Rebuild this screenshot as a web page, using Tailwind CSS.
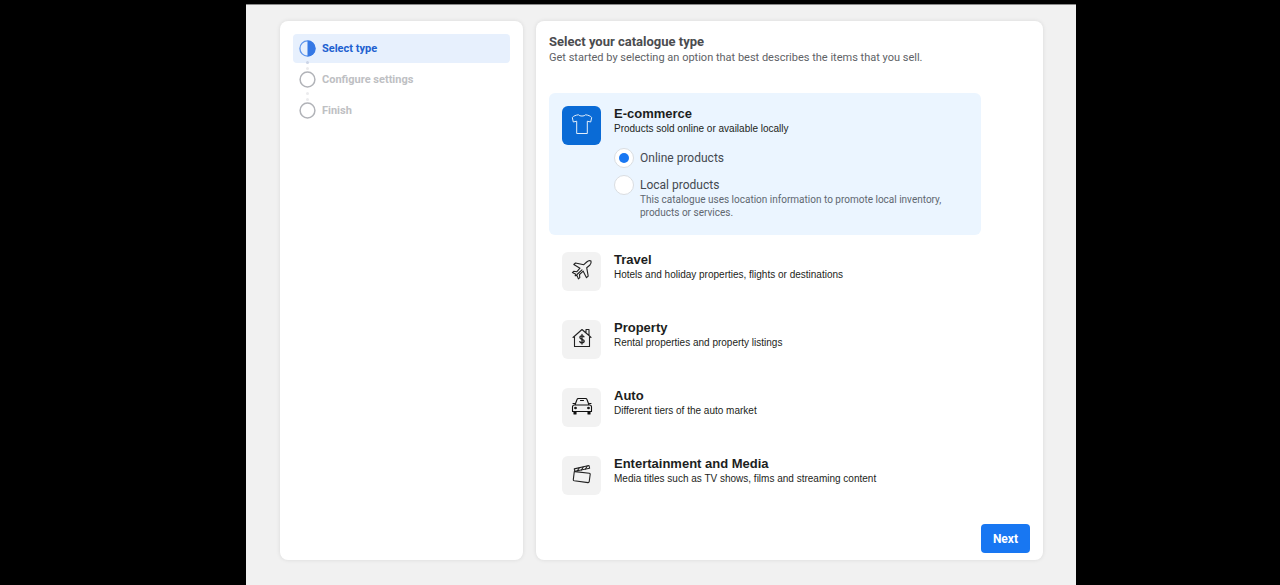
<!DOCTYPE html>
<html lang="en-GB">
<head>
    <meta charset="UTF-8">
    <meta name="viewport" content="width=device-width, initial-scale=1.0">
    <title>Create a catalogue - Select type</title>
    <script src="https://cdn.jsdelivr.net/npm/@tailwindcss/browser@4"></script>
</head>
<body class="bg-black pt-1 font-[Roboto,'Liberation_Sans',sans-serif]">
    <div class="ml-[246px] mr-[204px] min-h-[calc(100vh-4px)] flex items-stretch gap-[13px] border-t border-[#8a8a8a] bg-[#f1f1f1] pt-4 pb-[25px] pl-[34px] pr-[33px]">

        <!-- Steps -->
        <aside class="w-[243px] shrink-0 rounded-lg bg-white p-[13px] shadow-[0_0_4px_rgba(0,0,0,0.1)]">
            <ol class="text-[11px] leading-4 font-bold">
                <li class="flex h-[29px] items-center gap-[6px] rounded bg-[#e7f0fd] pl-[6px] text-[#2160d0]" aria-current="step">
                    <svg class="size-[17px]" viewBox="0 0 17 17" fill="none">
                        <circle cx="8.5" cy="8.5" r="7.6" stroke="#5f96ec" stroke-width="1.3"/>
                        <path d="M8.5 0.5a8 8 0 0 1 0 16z" fill="#3578e5"/>
                    </svg>
                    Select type
                </li>
                <li class="relative mt-[2px] flex h-[29px] items-center gap-[6px] pl-[6px] text-[#bec0c3]">
                    <span class="absolute left-[13px] -top-[4px] size-[3px] rounded-full bg-[#cbd4e6]"></span>
                    <span class="absolute left-[13px] top-[2px] size-[3px] rounded-full bg-[#ebebed]"></span>
                    <svg class="size-[17px]" viewBox="0 0 17 17" fill="none">
                        <circle cx="8.5" cy="8.5" r="7.4" stroke="#b1b3b8" stroke-width="1.5"/>
                    </svg>
                    Configure settings
                </li>
                <li class="relative mt-[2px] flex h-[29px] items-center gap-[6px] pl-[6px] text-[#bec0c3]">
                    <span class="absolute left-[13px] -top-[4px] size-[3px] rounded-full bg-[#ebebed]"></span>
                    <span class="absolute left-[13px] top-[2px] size-[3px] rounded-full bg-[#ebebed]"></span>
                    <svg class="size-[17px]" viewBox="0 0 17 17" fill="none">
                        <circle cx="8.5" cy="8.5" r="7.4" stroke="#b1b3b8" stroke-width="1.5"/>
                    </svg>
                    Finish
                </li>
            </ol>
        </aside>

        <!-- Catalogue type -->
        <main class="flex flex-1 flex-col rounded-lg bg-white p-[13px] pb-[7px] shadow-[0_0_4px_rgba(0,0,0,0.1)]">
            <h1 class="text-[13px] leading-4 font-bold text-[#4b4c4f]">Select your catalogue type</h1>
            <p class="text-[11px] leading-4 text-[#606266]">Get started by selecting an option that best describes the items that you sell.</p>

            <div class="mt-[27px] mr-[49px] flex flex-col gap-1">
                <section class="flex gap-[13px] rounded-md bg-[#ebf5ff] p-[13px] pb-4">
                    <span class="grid size-[39px] shrink-0 place-items-center rounded-md bg-[#0a6bd6]">
                        <svg class="mb-1 size-[22px]" viewBox="0 0 22 22" fill="none" stroke="#e4effb" stroke-width="1" stroke-linejoin="round">
                            <path d="M7.5 1.8C5 2 2.5 3 1.3 4.500L2.300 9l3.400-.8v12.300h10.600V8.200l3.400.8 1-4.500C19.500 3 17 2 14.500 1.800c-.8 1.700-6.200 1.700-7 0z"/>
                        </svg>
                    </span>
                    <div>
                        <h2 class="font-['Liberation_Sans',Arial,sans-serif] text-[13px] leading-4 font-bold text-[#1c1e21]">E-commerce</h2>
                        <p class="font-['Liberation_Sans',Arial,sans-serif] text-[10px] leading-[13px] text-[#1c1e21]">Products sold online or available locally</p>
                        <div class="mt-[13px] flex items-center gap-[6px]">
                            <input type="radio" name="product_kind" id="online" checked class="grid size-5 shrink-0 appearance-none place-content-center rounded-full border border-[#dadde1] bg-white before:size-[10px] before:rounded-full checked:before:bg-[#1877f2]">
                            <label for="online" class="text-xs leading-4 text-[#444950]">Online products</label>
                        </div>
                        <div class="mt-[7px] flex items-start gap-[6px]">
                            <input type="radio" name="product_kind" id="local" aria-describedby="local-help" class="grid size-5 shrink-0 appearance-none place-content-center rounded-full border border-[#dadde1] bg-white before:size-[10px] before:rounded-full checked:before:bg-[#1877f2]">
                            <div class="pt-[2px]">
                                <label for="local" class="block text-xs leading-4 text-[#444950]">Local products</label>
                                <p id="local-help" class="max-w-[310px] text-[10px] leading-[13px] text-[#606770]">This catalogue uses location information to promote local inventory, products or services.</p>
                            </div>
                        </div>
                    </div>
                </section>

                <button type="button" class="flex gap-[13px] rounded-md p-[13px] pb-3 text-left">
                    <span class="grid size-[39px] shrink-0 place-items-center rounded-md bg-[#f2f2f2]">
                        <svg class="mb-1 size-[22px]" viewBox="0 0 22 22" fill="none" stroke="#222" stroke-width="1.1" stroke-linejoin="round" stroke-linecap="round">
                            <path d="M20 2c-1.500-.8-3.200 0-4.300 1l-2.900 2.700L4.500 4 2.800 5.500l6.200 3.700-3.300 3.600-3-.5-1.300 1.300 3.400 1.600-.6 1.600 1.800-.4 1.400 3.500 1.400-1.200-.3-3.200 3.700-3.300 3.300 6.500 1.700-1.600-1.500-8.400L18.700 6.300C19.700 5.200 20.500 3.500 20 2z"/>
                            <path d="M6 15.500 11 10.900"/>
                        </svg>
                    </span>
                    <span class="font-['Liberation_Sans',Arial,sans-serif] text-[#1c1e21]">
                        <span class="block text-[13px] leading-4 font-bold">Travel</span>
                        <span class="block text-[10px] leading-[13px]">Hotels and holiday properties, flights or destinations</span>
                    </span>
                </button>

                <button type="button" class="flex gap-[13px] rounded-md p-[13px] pb-3 text-left">
                    <span class="grid size-[39px] shrink-0 place-items-center rounded-md bg-[#f2f2f2]">
                        <svg class="mb-1 size-[22px]" viewBox="0 0 22 22" fill="none" stroke="#222" stroke-width="1.1" stroke-linejoin="round" stroke-linecap="round">
                            <path d="M3.500 10v9.500h15V10M2 10.500 11 2.500l4 3.500V2.500h3v6l2 2M15 6l3 2.500"/>
                            <path d="M13 9.800c-.5-.8-1.200-1-2-1-1.200 0-2.100.6-2.100 1.700 0 2.400 4.300 1.200 4.300 3.600 0 1.100-1 1.700-2.200 1.700-1 0-1.800-.4-2.200-1.200M11 7.500v9.600" stroke-width="1.3"/>
                        </svg>
                    </span>
                    <span class="font-['Liberation_Sans',Arial,sans-serif] text-[#1c1e21]">
                        <span class="block text-[13px] leading-4 font-bold">Property</span>
                        <span class="block text-[10px] leading-[13px]">Rental properties and property listings</span>
                    </span>
                </button>

                <button type="button" class="flex gap-[13px] rounded-md p-[13px] pb-3 text-left">
                    <span class="grid size-[39px] shrink-0 place-items-center rounded-md bg-[#f2f2f2]">
                        <svg class="mb-1 size-[22px]" viewBox="0 0 22 22" fill="none" stroke="#111" stroke-width="1.1" stroke-linejoin="round" stroke-linecap="round">
                            <path d="M4 10 6 4.500C6.200 3.800 6.800 3.500 7.500 3.500h7c.7 0 1.300.3 1.500 1L18 10M3.500 10h15c1.200 0 2 .8 2 2v4.500h-19V12c0-1.200.8-2 2-2zM2 8.500h1.500M20 8.500h-1.500M9.500 5.500h3"/>
                            <path d="M3 17h2v2H3zM17 17h2v2h-2z" fill="#111"/>
                            <circle cx="4.500" cy="13" r=".8" fill="#111"/>
                            <circle cx="17.500" cy="13" r=".8" fill="#111"/>
                        </svg>
                    </span>
                    <span class="font-['Liberation_Sans',Arial,sans-serif] text-[#1c1e21]">
                        <span class="block text-[13px] leading-4 font-bold">Auto</span>
                        <span class="block text-[10px] leading-[13px]">Different tiers of the auto market</span>
                    </span>
                </button>

                <button type="button" class="flex gap-[13px] rounded-md p-[13px] pb-3 text-left">
                    <span class="grid size-[39px] shrink-0 place-items-center rounded-md bg-[#f2f2f2]">
                        <svg class="mb-1 size-[22px]" viewBox="0 0 22 22" fill="none" stroke="#222" stroke-width="1.1" stroke-linejoin="round" stroke-linecap="round">
                            <path d="M4 8.600 18.300 10.200c.6.1 1 .5.900 1.100l-1 7.400c-.1.600-.6 1-1.200.9L3.200 17.800c-.6-.1-1-.6-.9-1.200L3.300 8.500"/>
                            <path d="M3.300 5.900 18 2.500l.6 2.700L3.800 8.300z"/>
                            <path d="m6.500 7.700 1.700-2.900M10.500 6.900l1.700-3M14.500 6.100l1.700-3.100"/>
                        </svg>
                    </span>
                    <span class="font-['Liberation_Sans',Arial,sans-serif] text-[#1c1e21]">
                        <span class="block text-[13px] leading-4 font-bold">Entertainment and Media</span>
                        <span class="block text-[10px] leading-[13px]">Media titles such as TV shows, films and streaming content</span>
                    </span>
                </button>
            </div>

            <div class="mt-auto flex justify-end">
                <button type="button" class="h-[29px] rounded bg-[#1877f2] px-3 text-xs font-bold text-white">Next</button>
            </div>
        </main>
    </div>
</body>
</html>
